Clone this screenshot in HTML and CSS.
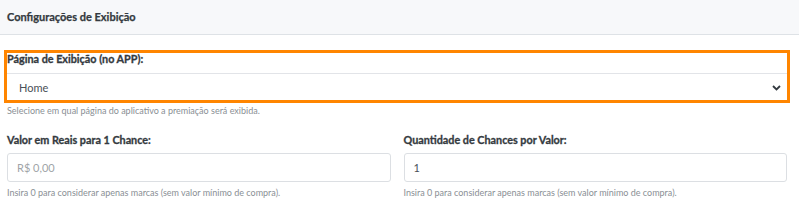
FILE: index.html
```html
<!DOCTYPE html>
<html lang="pt-BR">
<head>
    <meta charset="UTF-8">
    <meta name="viewport" content="width=device-width, initial-scale=1.0">
    <title>Configurações de Exibição</title>
    <link rel="stylesheet" href="styles.css">
</head>
<body>
    <div class="card">
        <div class="card-header">Configurações de Exibição</div>
        <div class="card-body">
            <div class="form-group highlight">
                <label for="pagina">Página de Exibição (no APP):</label>
                <div class="select-wrap">
                    <select id="pagina" class="form-control">
                        <option>Home</option>
                    </select>
                    <svg class="chevron" width="9" height="6" viewBox="0 0 9 6">
                        <path d="M1 1l3.5 3.5L8 1" fill="none" stroke="#343a40" stroke-width="1.8"/>
                    </svg>
                </div>
            </div>
            <small class="help">Selecione em qual página do aplicativo a premiação será exibida.</small>

            <div class="row">
                <div class="col">
                    <label for="valor">Valor em Reais para 1 Chance:</label>
                    <input id="valor" class="form-control" type="text" placeholder="R$ 0,00">
                    <small class="help">Insira 0 para considerar apenas marcas (sem valor mínimo de compra).</small>
                </div>
                <div class="col">
                    <label for="qtd">Quantidade de Chances por Valor:</label>
                    <input id="qtd" class="form-control" type="text" value="1">
                    <small class="help">Insira 0 para considerar apenas marcas (sem valor mínimo de compra).</small>
                </div>
            </div>
        </div>
    </div>
</body>
</html>
```

FILE: styles.css
```css
body {
    margin: 0;
    font-family: Lato, "Liberation Sans", sans-serif;
    color: #343a40;
    background-color: #fff;
}
.card-header {
    height: 34px;
    line-height: 34px;
    padding-left: 7px;
    background-color: #f7f8fa;
    border-bottom: 1px solid #dee2e6;
    font-size: 11px;
    font-weight: bold;
    -webkit-text-stroke: 0.25px #343a40;
}
.card-body {
    padding: 18px 12px 0 7px;
}
label {
    display: block;
    font-size: 10.8px;
    font-weight: bold;
    color: #343a40;
    -webkit-text-stroke: 0.3px #343a40;
}
.highlight {
    outline: 3px solid #ff8500;
    padding-top: 1px;
}
.highlight label {
    height: 19px;
    line-height: 10px;
    border-bottom: 1px solid #e2e4e8;
}
.select-wrap {
    position: relative;
}
select.form-control {
    appearance: none;
    -webkit-appearance: none;
    height: 26px;
    border: none;
    padding-left: 12px;
    color: #495057;
    font-size: 11px;
    font-family: inherit;
    background: #fff;
}
.chevron {
    position: absolute;
    right: 6px;
    top: 11px;
}
.form-control {
    display: block;
    width: 100%;
    box-sizing: border-box;
    outline: none;
}
.help {
    display: block;
    font-size: 9px;
    color: #8a8f95;
    margin-top: 5px;
}
.row {
    display: flex;
    gap: 13px;
    margin-top: 17px;
}
.col {
    flex: 1;
}
.col label {
    margin-bottom: 7px;
}
input.form-control {
    height: 29px;
    border: 1px solid #dcdfe3;
    border-radius: 3px;
    padding-left: 9px;
    font-size: 11px;
    font-family: inherit;
    color: #495057;
}
input::placeholder {
    color: #a0a4a8;
}
```
